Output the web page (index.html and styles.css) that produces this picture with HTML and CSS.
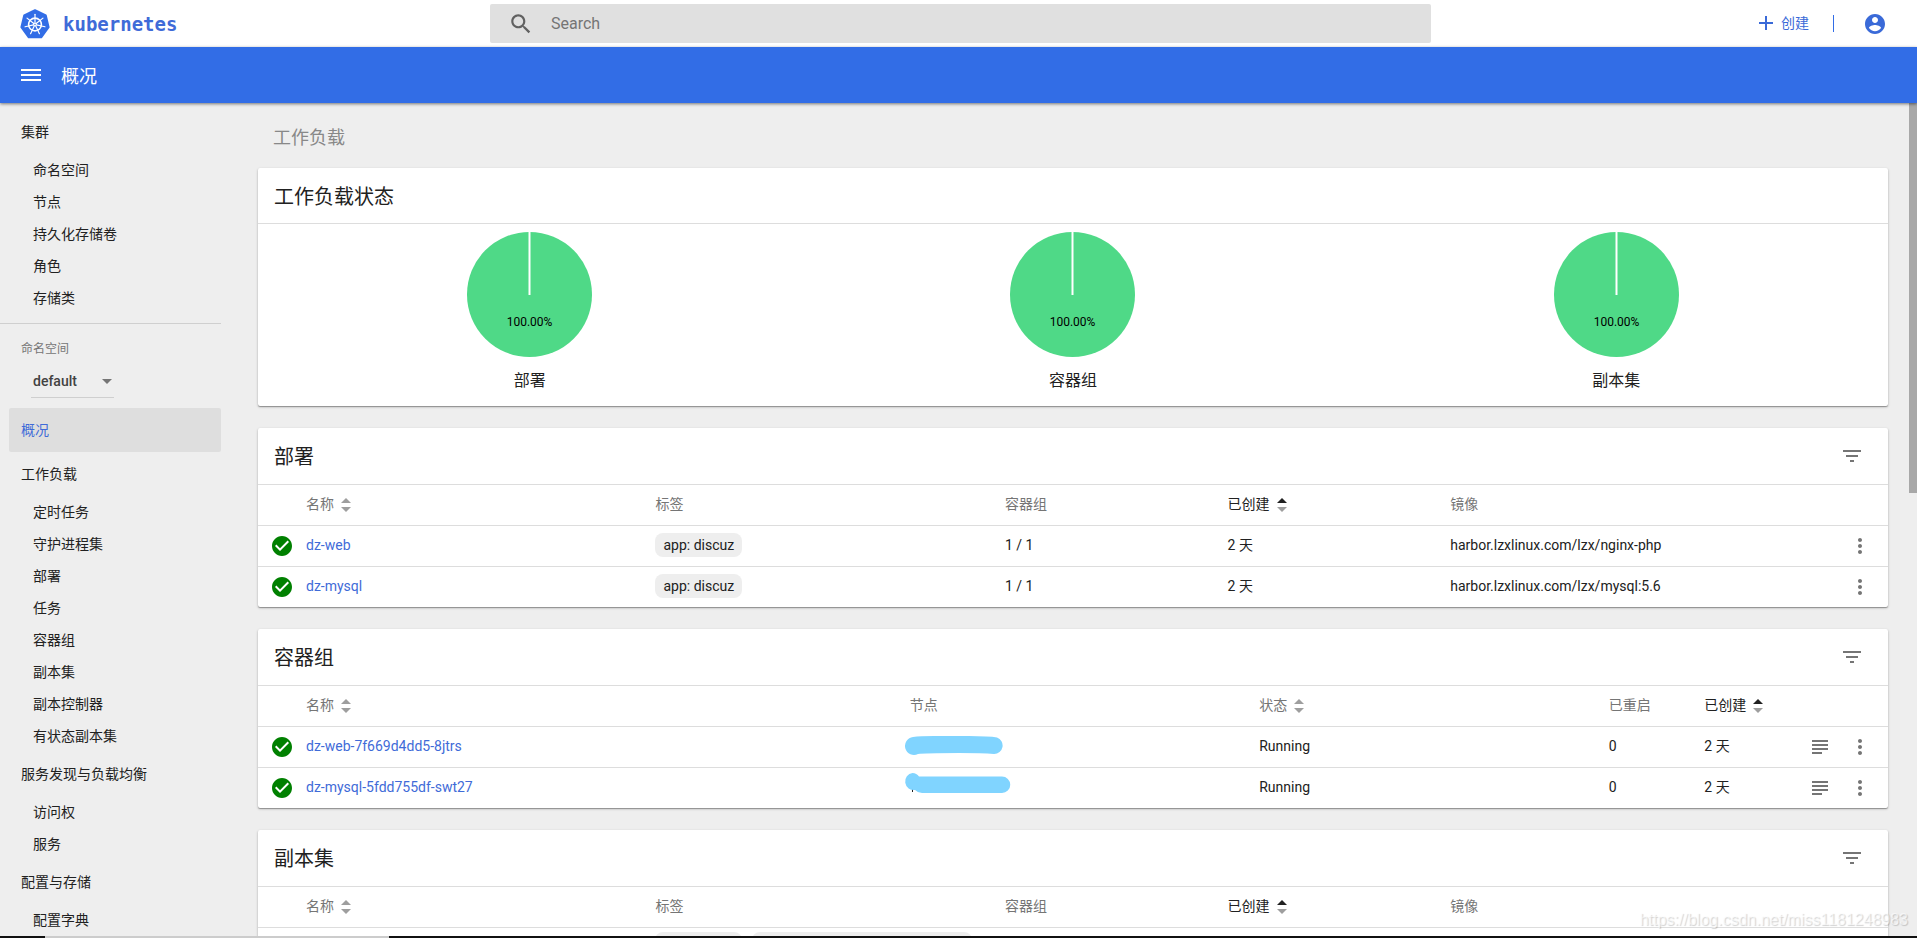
FILE: index.html
```html
<!DOCTYPE html>
<html lang="zh-CN">
<head>
<meta charset="utf-8">
<title>概况 - Kubernetes Dashboard</title>
<link rel="stylesheet" href="styles.css">
</head>
<body>
<svg class="defs" aria-hidden="true">
  <symbol id="i-check" viewBox="0 0 24 24"><path d="M12 2C6.48 2 2 6.48 2 12s4.480 10 10 10 10-4.480 10-10S17.520 2 12 2zm-2 15l-5-5 1.410-1.410L10 14.170l7.590-7.590L19 8l-9 9z"/></symbol>
  <symbol id="i-more" viewBox="0 0 24 24"><path d="M12 8c1.100 0 2-.9 2-2s-.9-2-2-2-2 .9-2 2 .9 2 2 2zm0 2c-1.100 0-2 .9-2 2s.9 2 2 2 2-.9 2-2-.9-2-2-2zm0 6c-1.100 0-2 .9-2 2s.9 2 2 2 2-.9 2-2-.9-2-2-2z"/></symbol>
  <symbol id="i-filter" viewBox="0 0 24 24"><path d="M10 18h4v-2h-4v2zM3 6v2h18V6H3zm3 7h12v-2H6v2z"/></symbol>
  <symbol id="i-logs" viewBox="0 0 16 16"><path d="M0 1h16v2H0zM0 5h16v2H0zM0 9h16v2H0zM0 13h10v2H0z"/></symbol>
  <symbol id="i-sort" viewBox="0 0 10 14"><path class="up" d="M0 5l5-5 5 5z"/><path d="M0 9h10l-5 5z"/></symbol>
</svg>
<div class="app">
  <header class="topbar">
    <a class="brand" href="#">
      <svg class="brand-logo" viewBox="0 0 30 30" aria-hidden="true">
        <path fill="#326de6" stroke="#326de6" stroke-width="2" stroke-linejoin="round" d="M15 1.200L25.800 6.400 28.600 18.200 21.200 28.300H8.800L1.400 18.200 4.200 6.400z"/>
        <g fill="none" stroke="#fff" stroke-linecap="round">
          <circle cx="15" cy="15.500" r="6.400" stroke-width="1.600"/>
          <g stroke-width="1.200">
            <path id="spoke" d="M15 14V5.300"/>
            <use href="#spoke" transform="rotate(51.430 15 15.500)"/>
            <use href="#spoke" transform="rotate(102.860 15 15.500)"/>
            <use href="#spoke" transform="rotate(154.290 15 15.500)"/>
            <use href="#spoke" transform="rotate(205.710 15 15.500)"/>
            <use href="#spoke" transform="rotate(257.140 15 15.500)"/>
            <use href="#spoke" transform="rotate(308.570 15 15.500)"/>
          </g>
        </g>
        <circle cx="15" cy="15.500" r="1.800" fill="#fff"/>
        <circle cx="15" cy="15.500" r=".7" fill="#326de6"/>
      </svg>
      <span class="brand-name">kubernetes</span>
    </a>
    <label class="search">
      <svg class="search-icon" viewBox="0 0 24 24" aria-hidden="true"><path d="M15.500 14h-.79l-.28-.27C15.410 12.590 16 11.110 16 9.500 16 5.910 13.090 3 9.500 3S3 5.910 3 9.500 5.910 16 9.500 16c1.610 0 3.090-.59 4.230-1.570l.27.28v.79l5 4.990L20.490 19l-4.990-5zm-6 0C7.010 14 5 11.990 5 9.500S7.010 5 9.500 5 14 7.010 14 9.500 11.990 14 9.500 14z"/></svg>
      <input class="search-input" type="text" placeholder="Search" aria-label="Search">
    </label>
    <div class="actions">
      <button class="create" type="button">
        <svg class="plus" viewBox="0 0 14 14" aria-hidden="true"><path d="M6 0h2v6h6v2H8v6H6V8H0V6h6z"/></svg>创建
      </button>
      <span class="separator"></span>
      <button class="account" type="button" aria-label="账户">
        <svg viewBox="0 0 24 24" aria-hidden="true"><path d="M12 2C6.480 2 2 6.480 2 12s4.480 10 10 10 10-4.480 10-10S17.520 2 12 2zm0 3c1.660 0 3 1.340 3 3s-1.340 3-3 3-3-1.340-3-3 1.340-3 3-3zm0 14.200c-2.500 0-4.710-1.280-6-3.220.03-1.990 4-3.080 6-3.080 1.990 0 5.970 1.090 6 3.080-1.290 1.940-3.500 3.220-6 3.220z"/></svg>
      </button>
    </div>
  </header>
  <div class="titlebar">
    <button class="menu-button" type="button" aria-label="菜单">
      <svg viewBox="0 0 20 12" aria-hidden="true"><path d="M0 0h20v2H0zM0 5h20v2H0zM0 10h20v2H0z"/></svg>
    </button>
    <h1 class="page-title">概况</h1>
  </div>
  <div class="body">
    <nav class="sidebar">
      <a class="nav-title" href="#">集群</a>
      <a class="nav-item" href="#">命名空间</a>
      <a class="nav-item" href="#">节点</a>
      <a class="nav-item" href="#">持久化存储卷</a>
      <a class="nav-item" href="#">角色</a>
      <a class="nav-item" href="#">存储类</a>
      <div class="namespace">
        <label class="namespace-label" for="ns">命名空间</label>
        <div class="select-wrap">
          <select class="namespace-select" id="ns"><option>default</option></select>
        </div>
      </div>
      <a class="nav-title nav-active" href="#">概况</a>
      <a class="nav-title" href="#">工作负载</a>
      <a class="nav-item" href="#">定时任务</a>
      <a class="nav-item" href="#">守护进程集</a>
      <a class="nav-item" href="#">部署</a>
      <a class="nav-item" href="#">任务</a>
      <a class="nav-item" href="#">容器组</a>
      <a class="nav-item" href="#">副本集</a>
      <a class="nav-item" href="#">副本控制器</a>
      <a class="nav-item" href="#">有状态副本集</a>
      <a class="nav-title" href="#">服务发现与负载均衡</a>
      <a class="nav-item" href="#">访问权</a>
      <a class="nav-item" href="#">服务</a>
      <a class="nav-title" href="#">配置与存储</a>
      <a class="nav-item" href="#">配置字典</a>
    </nav>
    <main class="content">
      <h2 class="group-title">工作负载</h2>
      <section class="card">
        <header class="card-head card-head-compact"><h3 class="card-title">工作负载状态</h3></header>
        <div class="charts">
          <figure class="chart">
            <svg class="pie" viewBox="0 0 125 125"><circle class="slice" cx="62.500" cy="62.500" r="62.500"/><path class="pie-edge" d="M62.500 0V63"/><text x="62.500" y="94">100.00%</text></svg>
            <figcaption>部署</figcaption>
          </figure>
          <figure class="chart">
            <svg class="pie" viewBox="0 0 125 125"><circle class="slice" cx="62.500" cy="62.500" r="62.500"/><path class="pie-edge" d="M62.500 0V63"/><text x="62.500" y="94">100.00%</text></svg>
            <figcaption>容器组</figcaption>
          </figure>
          <figure class="chart">
            <svg class="pie" viewBox="0 0 125 125"><circle class="slice" cx="62.500" cy="62.500" r="62.500"/><path class="pie-edge" d="M62.500 0V63"/><text x="62.500" y="94">100.00%</text></svg>
            <figcaption>副本集</figcaption>
          </figure>
        </div>
      </section>

      <section class="card">
        <header class="card-head"><h3 class="card-title">部署</h3><button class="icon-button" type="button" aria-label="筛选"><svg><use href="#i-filter"/></svg></button></header>
        <table>
          <colgroup><col class="c-icon"><col class="c-wide"><col class="c-wide"><col class="c-mid"><col class="c-mid"><col><col class="c-logs"><col class="c-menu"></colgroup>
          <thead><tr><th></th><th>名称<svg class="sort"><use href="#i-sort"/></svg></th><th>标签</th><th>容器组</th><th class="sorted">已创建<svg class="sort"><use href="#i-sort"/></svg></th><th>镜像</th><th></th><th></th></tr></thead>
          <tbody>
            <tr><td class="status"><svg><use href="#i-check"/></svg></td><td><a href="#">dz-web</a></td><td><span class="chip">app: discuz</span></td><td>1 / 1</td><td>2 天</td><td>harbor.lzxlinux.com/lzx/nginx-php</td><td></td><td class="menu"><button class="icon-button" type="button" aria-label="操作"><svg><use href="#i-more"/></svg></button></td></tr>
            <tr><td class="status"><svg><use href="#i-check"/></svg></td><td><a href="#">dz-mysql</a></td><td><span class="chip">app: discuz</span></td><td>1 / 1</td><td>2 天</td><td>harbor.lzxlinux.com/lzx/mysql:5.6</td><td></td><td class="menu"><button class="icon-button" type="button" aria-label="操作"><svg><use href="#i-more"/></svg></button></td></tr>
          </tbody>
        </table>
      </section>

      <section class="card">
        <header class="card-head"><h3 class="card-title">容器组</h3><button class="icon-button" type="button" aria-label="筛选"><svg><use href="#i-filter"/></svg></button></header>
        <table>
          <colgroup><col class="c-icon"><col><col class="c-wide"><col class="c-wide"><col class="c-small"><col class="c-small"><col class="c-logs"><col class="c-menu"></colgroup>
          <thead><tr><th></th><th>名称<svg class="sort"><use href="#i-sort"/></svg></th><th>节点</th><th>状态<svg class="sort"><use href="#i-sort"/></svg></th><th>已重启</th><th class="sorted">已创建<svg class="sort"><use href="#i-sort"/></svg></th><th></th><th></th></tr></thead>
          <tbody>
            <tr><td class="status"><svg><use href="#i-check"/></svg></td><td><a href="#">dz-web-7f669d4dd5-8jtrs</a></td><td class="node"><svg class="redaction" viewBox="0 0 108 32"><path d="M9 6Q16 5 30 5H65Q85 5 93 6.500A8.500 8.500 0 0 1 90 23Q78 22 55 22Q20 22 14 23A9 9 0 1 1 9 6z"/></svg></td><td>Running</td><td>0</td><td>2 天</td><td class="logs"><button class="icon-button" type="button" aria-label="日志"><svg class="logs-icon"><use href="#i-logs"/></svg></button></td><td class="menu"><button class="icon-button" type="button" aria-label="操作"><svg><use href="#i-more"/></svg></button></td></tr>
            <tr><td class="status"><svg><use href="#i-check"/></svg></td><td><a href="#">dz-mysql-5fdd755df-swt27</a></td><td class="node"><svg class="redaction" viewBox="0 0 108 32"><path class="ink" d="M8 17h1v3H8z"/><path d="M8.500 1A8.500 8.500 0 0 1 15 4.500H98A8 8 0 0 1 98 21H18Q14 21 11 18A8.500 8.500 0 1 1 8.500 1z"/></svg></td><td>Running</td><td>0</td><td>2 天</td><td class="logs"><button class="icon-button" type="button" aria-label="日志"><svg class="logs-icon"><use href="#i-logs"/></svg></button></td><td class="menu"><button class="icon-button" type="button" aria-label="操作"><svg><use href="#i-more"/></svg></button></td></tr>
          </tbody>
        </table>
      </section>

      <section class="card">
        <header class="card-head"><h3 class="card-title">副本集</h3><button class="icon-button" type="button" aria-label="筛选"><svg><use href="#i-filter"/></svg></button></header>
        <table>
          <colgroup><col class="c-icon"><col class="c-wide"><col class="c-wide"><col class="c-mid"><col class="c-mid"><col><col class="c-logs"><col class="c-menu"></colgroup>
          <thead><tr><th></th><th>名称<svg class="sort"><use href="#i-sort"/></svg></th><th>标签</th><th>容器组</th><th class="sorted">已创建<svg class="sort"><use href="#i-sort"/></svg></th><th>镜像</th><th></th><th></th></tr></thead>
          <tbody><tr><td></td><td></td><td class="chips"><span class="chip chip-blank"></span><span class="chip chip-blank chip-long"></span></td><td></td><td></td><td></td><td></td><td></td></tr></tbody>
        </table>
      </section>
    </main>
    <div class="scroll-thumb"></div>
  </div>
  <div class="taskbar"><span class="task-dark"></span><span class="task-light"></span></div>
  <div class="watermark">https://blog.csdn.net/miss1181248983</div>
</div>
</body>
</html>
```
FILE: styles.css
```css
* { box-sizing: border-box; }
html, body { height: 100%; margin: 0; }
body { overflow: hidden; background: #eee; color: #212121; font: 14px/20px Roboto, "Noto Sans CJK SC", sans-serif; }
a { color: #3f6bd8; text-decoration: none; }
button { padding: 0; border: 0; background: none; font: inherit; color: inherit; }
h1, h2, h3, figure { margin: 0; font-weight: 400; }
svg { display: block; fill: currentColor; }
.defs { position: absolute; width: 0; height: 0; }

.app { position: relative; display: flex; flex-direction: column; height: 100vh; }

.topbar { display: flex; align-items: center; flex: none; height: 47px; padding: 0 30px 0 20px; background: #fff; }
.brand { display: flex; align-items: center; gap: 13px; flex: none; width: 470px; }
.brand-logo { width: 30px; height: 30px; }
.brand-name { font: bold 19px/24px "DejaVu Sans Mono", monospace; }
.search { display: flex; align-items: center; flex: 1; height: 39px; padding: 0 18px; border-radius: 2px; background: #e0e0e0; }
.search-icon { width: 26px; height: 26px; color: #616161; }
.search-input { flex: 1; margin-left: 17px; padding: 0; border: 0; outline: 0; background: none; font: 16px/20px Roboto, sans-serif; color: #212121; }
.search-input::placeholder { color: #757575; opacity: 1; }
.actions { display: flex; align-items: center; justify-content: flex-end; flex: none; width: 456px; color: #3a6ad8; }
.create { display: flex; align-items: center; gap: 8px; padding-bottom: 2px; }
.plus { width: 14px; height: 14px; }
.separator { width: 1px; height: 17px; margin: 0 29px 0 24px; background: #326de6; }
.account svg { width: 24px; height: 24px; }

.titlebar { position: relative; z-index: 1; display: flex; align-items: center; gap: 20px; flex: none; height: 56px; padding: 0 21px; background: #326de6; color: #fff; box-shadow: 0 1px 3px rgba(0, 0, 0, .5); }
.menu-button svg { width: 20px; height: 12px; }
.page-title { padding-top: 3px; font-size: 18px; font-weight: 400; line-height: 24px; }

.body { position: relative; display: flex; flex: 1; min-height: 0; overflow: hidden; }
.sidebar { flex: none; width: 221px; padding-top: 7px; }
.nav-title, .nav-item { display: block; color: #212121; }
.nav-title { padding-left: 21px; line-height: 44px; }
.nav-item { padding-left: 33px; line-height: 32px; }
.nav-title.nav-active { margin-left: 9px; padding-left: 12px; border-radius: 2px; background: #dedede; color: #3f6bd8; }
.namespace { margin-top: 9px; padding: 15px 0 10px 21px; border-top: 1px solid #cfcfcf; }
.namespace-label { display: block; color: #757575; font-size: 12px; line-height: 20px; }
.select-wrap { position: relative; width: 83px; margin: 6px 0 0 10px; border-bottom: 1px solid #cfcfcf; }
.select-wrap::after { content: ""; position: absolute; top: 14px; right: 2px; border: 5px solid transparent; border-top-color: #757575; border-bottom: 0; pointer-events: none; }
.namespace-select { display: block; width: 100%; height: 32px; padding: 0 2px; border: 0; outline: 0; appearance: none; background: none; color: #424242; font: 500 14px/32px Roboto, sans-serif; }

.content { flex: 1; min-width: 0; padding: 0 29px 0 37px; }
.group-title { padding: 22px 15px 18px; color: #888; font-size: 18px; line-height: 25px; }
.card { margin-bottom: 22px; border-radius: 2px; background: #fff; box-shadow: 0 1px 3px rgba(0, 0, 0, .2), 0 1px 1px rgba(0, 0, 0, .3); }
.card-head { display: flex; align-items: center; justify-content: space-between; height: 57px; padding: 0 24px 0 16px; border-bottom: 1px solid #ddd; }
.card-head-compact { height: 56px; }
.card-title { padding-top: 2px; font-size: 20px; line-height: 28px; }
.icon-button { color: #757575; }
.icon-button svg { width: 24px; height: 24px; }

.charts { display: flex; padding: 8px 0 13px; }
.chart { display: flex; flex: 1; flex-direction: column; align-items: center; gap: 12px; font-size: 16px; line-height: 24px; }
.pie { width: 125px; height: 125px; }
.slice { fill: #4fd987; }
.pie-edge { stroke: #fff; stroke-width: 2px; }
.pie text { fill: #000; font-size: 12px; text-anchor: middle; }

table { width: 100%; table-layout: fixed; border-collapse: separate; border-spacing: 0; }
.c-icon { width: 48px; }
.c-wide { width: 21.44%; }
.c-mid { width: 13.66%; }
.c-small { width: 5.87%; }
.c-logs { width: 40px; }
.c-menu { width: 48px; }
th, td { height: 40px; padding: 0 0 2px; text-align: left; white-space: nowrap; }
th { color: #757575; font-weight: 400; }
.sorted { color: #212121; }
tbody td { height: 41px; border-top: 1px solid #ddd; }
.up { fill: var(--sort-up, #9e9e9e); }
.sort { display: inline-block; width: 10px; height: 14px; margin-left: 7px; vertical-align: -3px; color: #9e9e9e; }
.sorted .sort { --sort-up: #212121; }
.status, .logs, .menu, .node { padding: 0; }
.status { color: #008000; }
.status svg { width: 24px; height: 24px; margin-left: 12px; }
.chip { display: inline-block; padding: 2px 8px; border-radius: 8px; background: #eee; }
.chips { padding-top: 4px; vertical-align: top; }
.chip-blank { width: 87px; height: 24px; margin-right: 10px; }
.chip-long { width: 220px; margin-right: 0; }
.redaction { width: 108px; height: 32px; margin-left: -6px; color: #80d4ff; }
.ink { fill: #212121; }
.logs .icon-button, .menu .icon-button { display: block; width: 40px; }
.logs .icon-button svg, .menu .icon-button svg { margin: 0 auto; }
.logs .icon-button .logs-icon { width: 16px; height: 16px; }

.scroll-thumb { position: absolute; top: 0; right: 0; width: 8px; height: 390px; background: #a8a8a8; }
.taskbar { display: flex; flex: none; height: 2px; background: #111; }
.task-dark { width: 45px; }
.task-light { width: 344px; background: #ccc; }
.watermark { position: absolute; right: 9px; bottom: 8px; color: rgba(255, 255, 255, .6); font: 16px/20px "Liberation Sans", sans-serif; text-shadow: 1px 1px 1px rgba(0, 0, 0, .18); }
```
